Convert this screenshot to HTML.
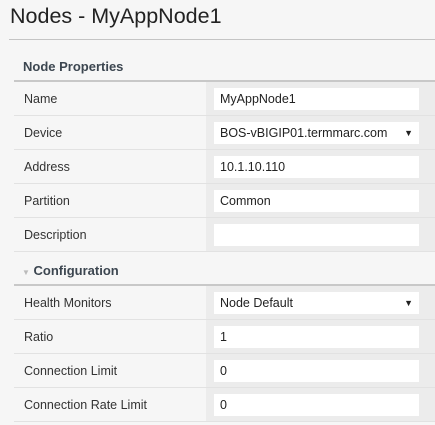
<!DOCTYPE html>
<html><head><style>
body{margin:0;width:435px;height:425px;background:#f6f6f6;font-family:"Liberation Sans",sans-serif;overflow:hidden;position:relative;color:#333}
.t{position:absolute;left:10px;top:4px;font-size:21.5px;color:#222}
.hr{position:absolute;left:9px;right:0;top:39px;height:1px;background:#c4c4c4}
.h{position:absolute;left:14px;right:0;height:34px;border-bottom:2px solid #c8c8c8;font-size:13px;font-weight:bold;color:#3c4650;line-height:37px;box-sizing:border-box}
.r{position:absolute;left:14px;right:0;height:34px;border-bottom:1px solid #e2e2e2;box-sizing:border-box}
.r .l{position:absolute;left:10px;top:1px;line-height:33px;font-size:12.5px;color:#333}
.r .c{position:absolute;left:192px;right:0;top:0;bottom:0;background:#ececec}
.r .i{position:absolute;left:8px;top:6px;width:205px;height:22px;background:#fff;font-size:12.5px;line-height:23px;padding-left:6px;box-sizing:border-box;color:#222}
.a{position:absolute;right:6px;top:0;font-size:9px}
</style></head><body>
<div class="t">Nodes - MyAppNode1</div>
<div class="hr"></div>
<div class="h" style="top:48px;padding-left:9px">Node Properties</div>
<div class="r" style="top:82px"><div class="l">Name</div><div class="c"><div class="i">MyAppNode1</div></div></div>
<div class="r" style="top:116px"><div class="l">Device</div><div class="c"><div class="i">BOS-vBIGIP01.termmarc.com<span class="a">▼</span></div></div></div>
<div class="r" style="top:150px"><div class="l">Address</div><div class="c"><div class="i">10.1.10.110</div></div></div>
<div class="r" style="top:184px"><div class="l">Partition</div><div class="c"><div class="i">Common</div></div></div>
<div class="r" style="top:218px"><div class="l">Description</div><div class="c"><div class="i"></div></div></div>
<div class="h" style="top:252px;padding-left:8px"><span style="color:#bbb;font-size:8px;font-weight:normal">▼</span> Configuration</div>
<div class="r" style="top:286px"><div class="l">Health Monitors</div><div class="c"><div class="i">Node Default<span class="a">▼</span></div></div></div>
<div class="r" style="top:320px"><div class="l">Ratio</div><div class="c"><div class="i">1</div></div></div>
<div class="r" style="top:354px"><div class="l">Connection Limit</div><div class="c"><div class="i">0</div></div></div>
<div class="r" style="top:388px"><div class="l">Connection Rate Limit</div><div class="c"><div class="i">0</div></div></div>
</body></html>
